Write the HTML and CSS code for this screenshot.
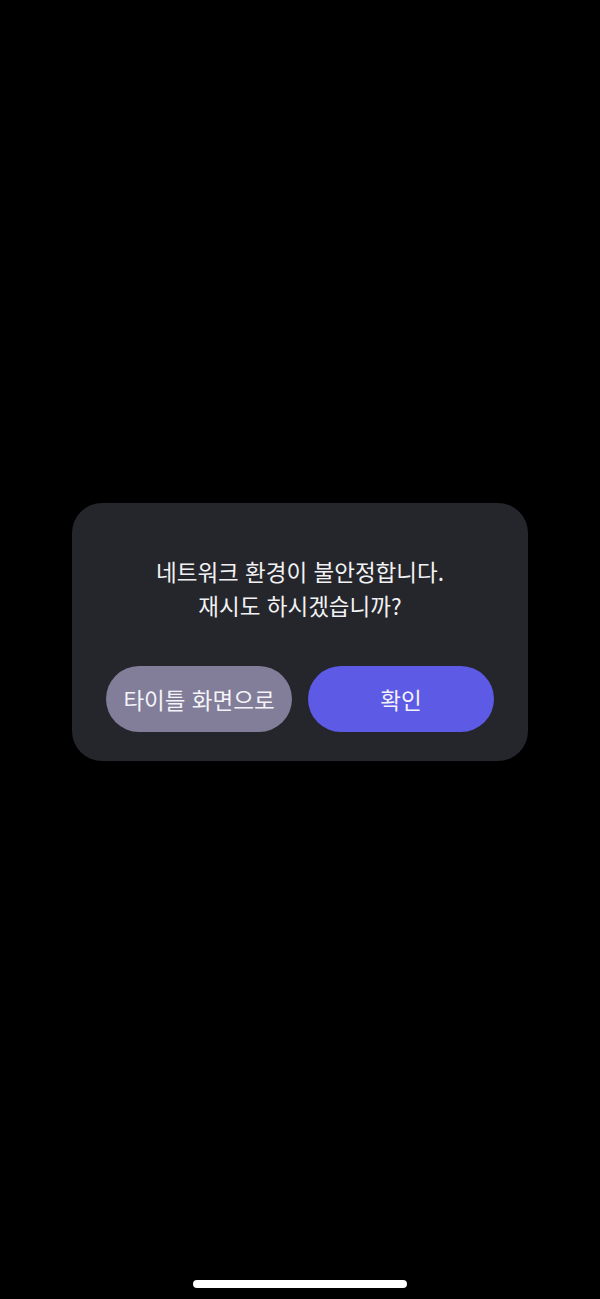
FILE: index.html
```html
<!DOCTYPE html>
<html lang="ko">
<head>
    <meta charset="UTF-8">
    <meta name="viewport" content="width=device-width, initial-scale=1.0">
    <title>네트워크 오류</title>
    <link rel="stylesheet" href="styles.css">
</head>
<body>
    <div class="screen">
        <div class="dialog">
            <p class="message">네트워크 환경이 불안정합니다.<br>재시도 하시겠습니까?</p>
            <div class="actions">
                <button class="btn btn-secondary">타이틀 화면으로</button>
                <button class="btn btn-primary">확인</button>
            </div>
        </div>
        <div class="home-indicator"></div>
    </div>
</body>
</html>
```

FILE: styles.css
```css
html, body {
    margin: 0;
    padding: 0;
    background-color: #000000;
}

body {
    font-family: 'Noto Sans CJK KR', 'Noto Sans', sans-serif;
    color: #f2f2f4;
}

.screen {
    display: flex;
    flex-direction: column;
    align-items: center;
    height: 1299px;
    box-sizing: border-box;
    padding-top: 503px;
}

/* Dialog card */
.dialog {
    width: 456px;
    box-sizing: border-box;
    background-color: #25262b;
    border-radius: 30px;
    padding: 51px 34px 29px;
}

.message {
    margin: 0;
    text-align: center;
    font-size: 22.5px;
    line-height: 34px;
    font-weight: 400;
}

.actions {
    display: flex;
    gap: 16px;
    margin-top: 44px;
}

.btn {
    flex: 1;
    height: 66px;
    border: none;
    border-radius: 33px;
    font-family: inherit;
    font-size: 22.5px;
    font-weight: 400;
    color: #f4f4f8;
    padding: 0;
}

.btn-secondary {
    background-color: #827d99;
}

.btn-primary {
    background-color: #5d5ae6;
}

.home-indicator {
    width: 214px;
    height: 8px;
    border-radius: 4px;
    background-color: #ffffff;
    margin-top: auto;
    margin-bottom: 11px;
}
```
